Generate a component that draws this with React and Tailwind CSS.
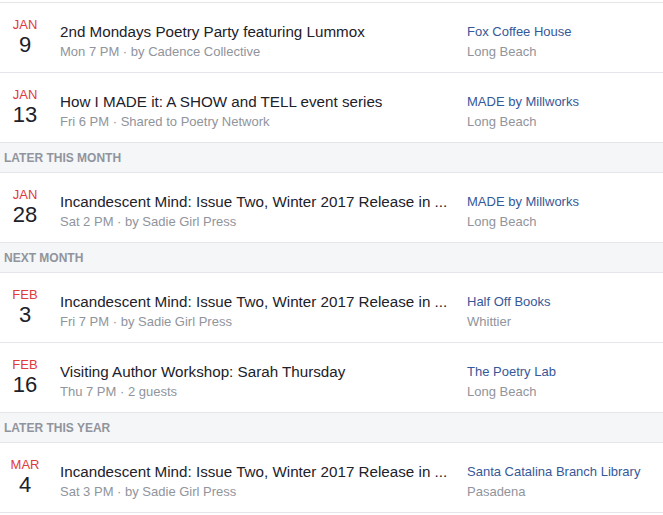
const groups = [
  {
    label: null,
    events: [
      { mon: 'JAN', day: '9', title: '2nd Mondays Poetry Party featuring Lummox', sub: 'Mon 7 PM · by Cadence Collective', place: 'Fox Coffee House', city: 'Long Beach' },
      { mon: 'JAN', day: '13', title: 'How I MADE it: A SHOW and TELL event series', sub: 'Fri 6 PM · Shared to Poetry Network', place: 'MADE by Millworks', city: 'Long Beach' },
    ],
  },
  {
    label: 'Later this month',
    events: [
      { mon: 'JAN', day: '28', title: 'Incandescent Mind: Issue Two, Winter 2017 Release in ...', sub: 'Sat 2 PM · by Sadie Girl Press', place: 'MADE by Millworks', city: 'Long Beach' },
    ],
  },
  {
    label: 'Next month',
    events: [
      { mon: 'FEB', day: '3', title: 'Incandescent Mind: Issue Two, Winter 2017 Release in ...', sub: 'Fri 7 PM · by Sadie Girl Press', place: 'Half Off Books', city: 'Whittier' },
      { mon: 'FEB', day: '16', title: 'Visiting Author Workshop: Sarah Thursday', sub: 'Thu 7 PM · 2 guests', place: 'The Poetry Lab', city: 'Long Beach' },
    ],
  },
  {
    label: 'Later this year',
    events: [
      { mon: 'MAR', day: '4', title: 'Incandescent Mind: Issue Two, Winter 2017 Release in ...', sub: 'Sat 3 PM · by Sadie Girl Press', place: 'Santa Catalina Branch Library', city: 'Pasadena' },
    ],
  },
]

function EventRow({ e }) {
  return (
    <div className="flex h-[70px] items-start border-b border-[#e5e6e9] bg-white pt-[15px]">
      <div className="w-[50px] text-center leading-none">
        <div className="text-[13px] text-[#e0393e]">{e.mon}</div>
        <div className="mt-[3px] text-[22px] text-[#1d2129]">{e.day}</div>
      </div>
      <div className="ml-[10px] w-[397px]">
        <div className="truncate pt-[5px] text-[15.2px] leading-[18px] text-[#1d2129]">{e.title}</div>
        <div className="mt-[3px] text-[13px] leading-[16px] text-[#90949c]">{e.sub}</div>
      </div>
      <div className="ml-[10px]">
        <div className="pt-[6px] text-[13px] leading-[16px] text-[#365899]">{e.place}</div>
        <div className="mt-[4px] text-[13px] leading-[16px] text-[#90949c]">{e.city}</div>
      </div>
    </div>
  )
}

export default function App() {
  return (
    <div className="min-h-[515px] bg-white pt-[2px] font-['Liberation_Sans',Arial,sans-serif]">
      <div className="border-t border-[#e5e6e9]">
        {groups.map((g, i) => (
          <div key={i}>
            {g.label && (
              <div className="flex h-[30px] items-center border-b border-[#e5e6e9] bg-[#f5f6f7] pl-[4px] text-[12px] font-bold uppercase text-[#90949c]">
                {g.label}
              </div>
            )}
            {g.events.map(e => <EventRow key={e.mon + e.day} e={e} />)}
          </div>
        ))}
      </div>
    </div>
  )
}
